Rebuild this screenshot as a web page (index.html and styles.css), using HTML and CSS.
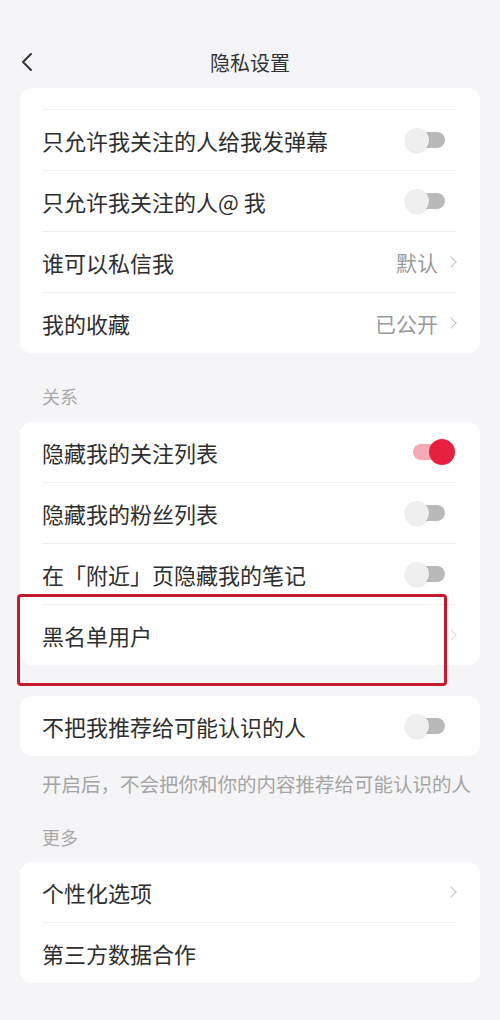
FILE: index.html
```html
<!DOCTYPE html>
<html lang="zh-CN">
<head>
  <meta charset="UTF-8">
  <meta name="viewport" content="width=device-width, initial-scale=1.0">
  <title>隐私设置</title>
  <link rel="stylesheet" href="styles.css">
</head>
<body>

<div class="page">
  <div class="topbar">
    <span class="back">
      <svg width="12" height="20" viewBox="0 0 12 20"><path d="M10 2 L2 10 L10 18" fill="none" stroke="#333" stroke-width="2" stroke-linecap="round" stroke-linejoin="round"/></svg>
    </span>
    <span class="title">隐私设置</span>
  </div>

  <div class="card">
    <div class="card-top"></div>
    <div class="row">
      <span class="label">只允许我关注的人给我发弹幕</span>
      <span class="switch"><span class="knob"></span></span>
    </div>
    <div class="row">
      <span class="label">只允许我关注的人@ 我</span>
      <span class="switch"><span class="knob"></span></span>
    </div>
    <div class="row link">
      <span class="label">谁可以私信我</span>
      <span class="value">默认</span>
      <span class="arrow"></span>
    </div>
    <div class="row link">
      <span class="label">我的收藏</span>
      <span class="value">已公开</span>
      <span class="arrow"></span>
    </div>
  </div>

  <div class="section">关系</div>
  <div class="card">
    <div class="row">
      <span class="label">隐藏我的关注列表</span>
      <span class="switch on"><span class="knob"></span></span>
    </div>
    <div class="row">
      <span class="label">隐藏我的粉丝列表</span>
      <span class="switch"><span class="knob"></span></span>
    </div>
    <div class="row">
      <span class="label">在「附近」页隐藏我的笔记</span>
      <span class="switch"><span class="knob"></span></span>
    </div>
    <div class="row link marked">
      <span class="label">黑名单用户</span>
      <span class="arrow faint"></span>
      <span class="mark"></span>
    </div>
  </div>

  <div class="card gap">
    <div class="row">
      <span class="label">不把我推荐给可能认识的人</span>
      <span class="switch"><span class="knob"></span></span>
    </div>
  </div>
  <div class="note">开启后，不会把你和你的内容推荐给可能认识的人</div>

  <div class="section more">更多</div>
  <div class="card">
    <div class="row link">
      <span class="label">个性化选项</span>
      <span class="arrow"></span>
    </div>
    <div class="row">
      <span class="label">第三方数据合作</span>
    </div>
  </div>
</div>

</body>
</html>
```

FILE: styles.css
```css
body {
  margin: 0;
  background-color: #f5f5f7;
  font-family: "Noto Sans CJK SC", "Noto Sans", sans-serif;
  color: #333;
}

.page {
  width: 500px;
}

.topbar {
  display: flex;
  align-items: center;
  justify-content: center;
  position: relative;
  height: 44px;
  padding-top: 40px;
  margin-bottom: 4px;
}

.back {
  position: absolute;
  left: 21px;
  top: 52px;
  display: flex;
}

.title {
  font-size: 20px;
  color: #333;
}

.card {
  margin: 0 20px;
  background-color: #fff;
  border-radius: 12px;
}

.card.gap {
  margin-top: 31px;
}

.card-top {
  height: 21px;
  margin: 0 24px 0 22px;
  border-bottom: 1px solid #efeff1;
}

.row {
  display: flex;
  align-items: center;
  height: 60px;
  padding: 0 22px;
  position: relative;
}

.row + .row::before {
  content: "";
  position: absolute;
  top: -1px;
  left: 22px;
  right: 24px;
  border-top: 1px solid #efeff1;
}

.row + .row {
  border-top: 1px solid transparent;
}

.label {
  flex: 1;
  font-size: 22px;
  color: #2e2e2e;
  white-space: nowrap;
}

.value {
  font-size: 21px;
  color: #9a9a9a;
  margin-right: 9px;
}

.arrow {
  width: 7px;
  height: 7px;
  border-top: 1.5px solid #c4c4c4;
  border-right: 1.5px solid #c4c4c4;
  transform: rotate(45deg);
  margin-right: 3px;
}

.arrow.faint {
  border-color: #dcdcdc;
}

/* switch: a short track with the knob sitting over it */
.switch {
  position: relative;
  width: 42px;
  height: 24px;
  margin-right: 11px;
}

.switch::before {
  content: "";
  position: absolute;
  left: 2px;
  right: 2px;
  top: 4px;
  height: 16px;
  border-radius: 8px;
  background-color: #b9b9b9;
}

.knob {
  position: absolute;
  left: 0;
  top: 0;
  width: 24px;
  height: 24px;
  border-radius: 50%;
  background-color: #efefef;
  box-shadow: 0 1px 2px rgba(0, 0, 0, 0.12);
}

.switch.on::before {
  left: 8px;
  background-color: #f6a9b6;
}

.switch.on .knob {
  left: 24px;
  top: -1px;
  width: 26px;
  height: 26px;
  background-color: #e8203f;
  box-shadow: none;
}

.section {
  font-size: 18px;
  color: #aaa;
  line-height: 24px;
  padding: 31px 0 14px 42px;
}

.section.more {
  padding-top: 28px;
  padding-bottom: 13px;
}

.note {
  font-size: 19.5px;
  color: #a5a5a5;
  line-height: 26px;
  padding: 15px 0 0 42px;
  white-space: nowrap;
}

/* red highlight frame drawn over the blacklist row */
.mark {
  position: absolute;
  left: -3px;
  top: -11px;
  width: 424px;
  height: 86px;
  border: 3px solid #c41a2c;
  border-radius: 4px;
}
```
